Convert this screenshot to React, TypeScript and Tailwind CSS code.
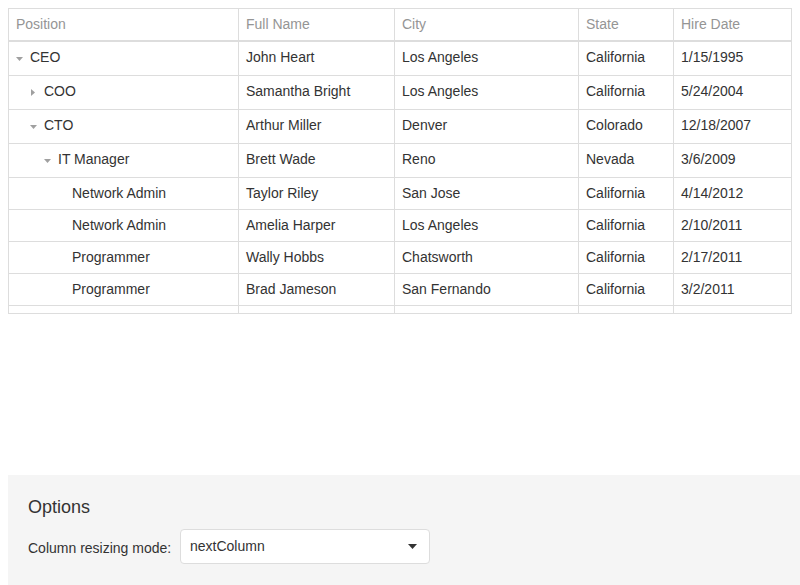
type Row = {
  position: string;
  name: string;
  city: string;
  state: string;
  hired: string;
  level: number;
  toggle?: "open" | "closed";
};

const rows: Row[] = [
  { position: "CEO", name: "John Heart", city: "Los Angeles", state: "California", hired: "1/15/1995", level: 0, toggle: "open" },
  { position: "COO", name: "Samantha Bright", city: "Los Angeles", state: "California", hired: "5/24/2004", level: 1, toggle: "closed" },
  { position: "CTO", name: "Arthur Miller", city: "Denver", state: "Colorado", hired: "12/18/2007", level: 1, toggle: "open" },
  { position: "IT Manager", name: "Brett Wade", city: "Reno", state: "Nevada", hired: "3/6/2009", level: 2, toggle: "open" },
  { position: "Network Admin", name: "Taylor Riley", city: "San Jose", state: "California", hired: "4/14/2012", level: 3 },
  { position: "Network Admin", name: "Amelia Harper", city: "Los Angeles", state: "California", hired: "2/10/2011", level: 3 },
  { position: "Programmer", name: "Wally Hobbs", city: "Chatsworth", state: "California", hired: "2/17/2011", level: 3 },
  { position: "Programmer", name: "Brad Jameson", city: "San Fernando", state: "California", hired: "3/2/2011", level: 3 },
];

const cols = "grid grid-cols-[230px_156px_184px_95px_117px]";
const cell = "flex items-center px-[7px] border-r border-[#dddddd] whitespace-nowrap overflow-hidden";
const lastCell = "flex items-center px-[7px] whitespace-nowrap overflow-hidden";

function Caret({ kind }: { kind: "open" | "closed" }) {
  if (kind === "open") {
    return (
      <svg width="7" height="4" viewBox="0 0 7 4" className="mt-[3px]">
        <polygon points="0,0 7,0 3.5,4" fill="#a0a0a0" />
      </svg>
    );
  }
  return (
    <svg width="4" height="7" viewBox="0 0 4 7" className="ml-[1px] mt-[2px]">
      <polygon points="0,0 4,3.5 0,7" fill="#a0a0a0" />
    </svg>
  );
}

export default function App() {
  return (
    <div
      className="w-[800px] h-[585px] overflow-hidden bg-white text-[14px] text-[#333333]"
      style={{ fontFamily: "'Liberation Sans', Arial, sans-serif" }}
    >
      <div className="p-2">
        <div className="w-[784px] border border-[#dddddd]">
          <div className={`${cols} h-[33px] border-b-2 border-[#dddddd] text-[#959595]`}>
            <div className={cell}>Position</div>
            <div className={cell}>Full Name</div>
            <div className={cell}>City</div>
            <div className={cell}>State</div>
            <div className={lastCell}>Hire Date</div>
          </div>

          {rows.map((r, i) => {
            const pad = r.toggle ? "pb-[2px]" : "";
            return (
              <div
                key={i}
                className={`${cols} border-b border-[#dddddd] ${r.toggle ? "h-[34px]" : "h-[32px]"}`}
              >
                <div className={`${cell} ${pad}`}>
                  {Array.from({ length: r.level }).map((_, k) => (
                    <span key={k} className="w-[14px] shrink-0" />
                  ))}
                  <span className="w-[14px] shrink-0 flex items-center">
                    {r.toggle && <Caret kind={r.toggle} />}
                  </span>
                  <span>{r.position}</span>
                </div>
                <div className={`${cell} ${pad}`}>{r.name}</div>
                <div className={`${cell} ${pad}`}>{r.city}</div>
                <div className={`${cell} ${pad}`}>{r.state}</div>
                <div className={`${lastCell} ${pad}`}>{r.hired}</div>
              </div>
            );
          })}

          <div className={`${cols} h-[7px]`}>
            <div className="border-r border-[#dddddd]" />
            <div className="border-r border-[#dddddd]" />
            <div className="border-r border-[#dddddd]" />
            <div className="border-r border-[#dddddd]" />
            <div />
          </div>
        </div>
      </div>

      <div className="ml-2 mt-[153px] bg-[#f5f5f5] px-5 pt-5 pb-6">
        <div className="text-[18px] leading-6 text-[#333333]">Options</div>
        <div className="mt-[10px] flex items-center">
          <div className="w-[152px] pt-[3px]">Column resizing mode:</div>
          <div className="w-[250px] h-[35px] bg-white border border-[#dddddd] rounded flex items-center justify-between pl-[9px] pr-[12px]">
            <span>nextColumn</span>
            <svg width="9" height="5" viewBox="0 0 9 5">
              <polygon points="0,0 9,0 4.5,5" fill="#333333" />
            </svg>
          </div>
        </div>
      </div>
    </div>
  );
}
